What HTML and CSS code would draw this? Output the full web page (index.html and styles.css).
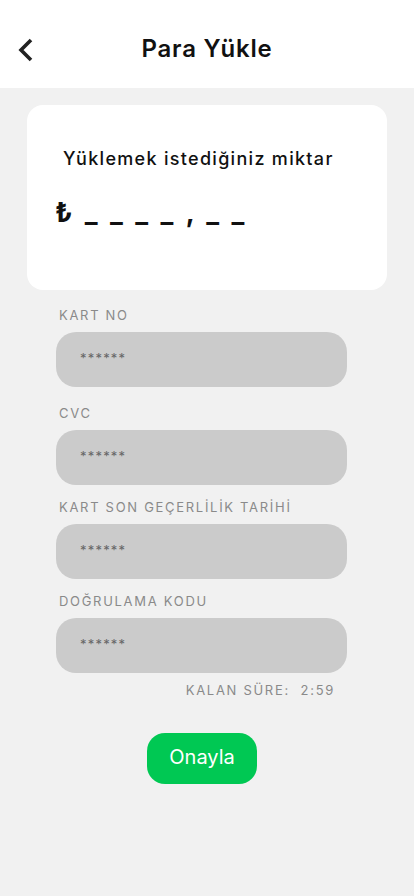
FILE: index.html
```html
<!DOCTYPE html>
<html lang="tr">
<head>
<meta charset="utf-8">
<title>Para Yükle</title>
<link rel="stylesheet" href="styles.css">
</head>
<body>
<header class="topbar">
  <button class="back" aria-label="Geri">
    <svg width="20" height="26" viewBox="0 0 20 26"><path d="M15 3 L5 13 L15 23" fill="none" stroke="#222" stroke-width="3.6" stroke-linecap="butt" stroke-linejoin="miter"/></svg>
  </button>
  <h1 class="title">Para Yükle</h1>
  <span></span>
</header>
<main class="content">
  <section class="card">
    <p class="card-label">Yüklemek istediğiniz miktar</p>
    <p class="amount">₺ _ _ _ _ , _ _</p>
  </section>
  <form class="form">
    <label class="field first">
      <span class="field-label">KART NO</span>
      <span class="input">******</span>
    </label>
    <label class="field">
      <span class="field-label">CVC</span>
      <span class="input">******</span>
    </label>
    <label class="field">
      <span class="field-label">KART SON GEÇERLİLİK TARİHİ</span>
      <span class="input">******</span>
    </label>
    <label class="field last">
      <span class="field-label">DOĞRULAMA KODU</span>
      <span class="input">******</span>
    </label>
    <p class="timer">KALAN SÜRE:&nbsp; 2:59</p>
    <button type="button" class="confirm">Onayla</button>
  </form>
</main>
</body>
</html>
```
FILE: styles.css
```css
* { box-sizing: border-box; }
html, body { margin: 0; padding: 0; }
body {
  background: #f1f1f1;
  font-family: Inter, "Noto Sans", sans-serif;
  width: 414px;
  min-height: 896px;
}
.topbar {
  height: 88px;
  background: #fff;
  display: grid;
  grid-template-columns: 60px 1fr 60px;
  align-items: center;
}
.back {
  border: 0;
  background: none;
  padding: 0 0 0 16px;
  margin-top: 12px;
  display: flex;
  align-items: center;
  cursor: pointer;
}
.title {
  margin: 0;
  text-align: center;
  font-size: 24px;
  font-weight: 600;
  color: #111;
  padding-top: 8px;
  letter-spacing: 0.8px;
}
.content {
  padding: 17px 27px 0;
}
.card {
  background: #fff;
  border-radius: 16px;
  height: 185px;
  padding: 43px 36px 0;
}
.card-label {
  margin: 0;
  font-size: 18px;
  font-weight: 500;
  color: #111;
  letter-spacing: 1.3px;
}
.amount {
  margin: 27px 0 0 -8px;
  font-size: 27px;
  font-weight: 700;
  color: #111;
  letter-spacing: 3px;
}
.form {
  padding: 15px 40px 0 29px;
  display: flex;
  flex-direction: column;
}
.field {
  display: flex;
  flex-direction: column;
  margin-bottom: 12px;
}
.field.first { margin-bottom: 16px; }
.field.last { margin-bottom: 0; }
.field-label {
  font-size: 13px;
  color: #8a8a8a;
  letter-spacing: 1.7px;
  padding-left: 3px;
  height: 20px;
  line-height: 20px;
  margin-bottom: 7px;
}
.input {
  height: 55px;
  border-radius: 20px;
  background: #cbcbcb;
  color: #666;
  font-size: 13px;
  letter-spacing: 1.2px;
  display: flex;
  align-items: center;
  padding-left: 24px;
  padding-bottom: 4px;
}
.timer {
  margin: 8px 12px 0 0;
  text-align: right;
  font-size: 13px;
  line-height: 18px;
  color: #8a8a8a;
  letter-spacing: 1.7px;
}
.confirm {
  align-self: flex-start;
  margin: 34px 0 0 91px;
  width: 110px;
  height: 51px;
  border: 0;
  border-radius: 18px;
  background: #00c853;
  color: #fff;
  font-family: Inter, "Noto Sans", sans-serif;
  font-size: 20px;
  font-weight: 400;
  padding-bottom: 4px;
}
```
